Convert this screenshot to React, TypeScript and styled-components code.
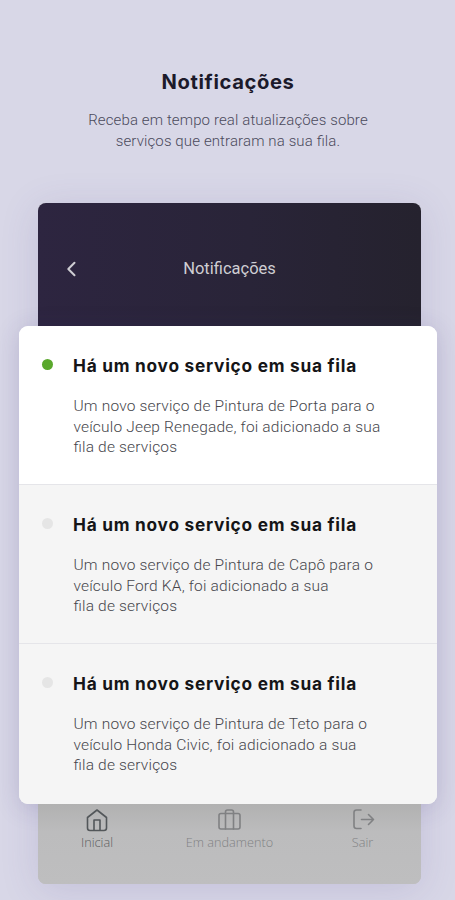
import React from "react";
import styled, { createGlobalStyle } from "styled-components";

const GlobalStyle = createGlobalStyle`
  * { box-sizing: border-box; }
  body { margin: 0; background: #d8d7e7; }
`;

const Page = styled.main`
  height: 900px;
  overflow: hidden;
  padding-top: 66px;
  background: #d8d7e7;
  font-family: Roboto, sans-serif;
`;

const Intro = styled.header`
  height: 137px;
  text-align: center;
`;

const Title = styled.h1`
  margin: 0;
  padding-left: 1px;
  font: 700 20.2px/31px Inter, sans-serif;
  letter-spacing: 0.6px;
  color: #1c1a2b;
`;

const Lead = styled.p`
  margin: 13px 0 0;
  padding-left: 1px;
  font-size: 15px;
  font-weight: 300;
  letter-spacing: 0.12px;
  font-feature-settings: "liga" 1;
  line-height: 21px;
  color: #4b4a5c;
`;

const Phone = styled.section`
  width: 383px;
  height: 681px;
  margin-left: 38px;
  border-radius: 8px;
  background: #bebebf;
  box-shadow: 0 6px 38px rgba(80, 70, 140, 0.15);
`;

const TopBar = styled.div`
  display: grid;
  grid-template-columns: 1fr auto 1fr;
  align-items: center;
  height: 123px;
  padding: 8px 26px 0;
  border-radius: 8px 8px 0 0;
  background: linear-gradient(90deg, #2d2540, #292438 55%, #25222e);
  color: #cfced3;
`;

const BackIcon = styled.svg`
  width: 14px;
  height: 16px;
`;

const BarTitle = styled.h2`
  margin: 0;
  font-size: 16.5px;
  font-weight: 400;
  line-height: 22px;
`;

const Cards = styled.ul`
  width: 418px;
  height: 478px;
  margin: 0 0 0 -19px;
  padding: 0;
  list-style: none;
  overflow: hidden;
  border-radius: 9px;
  background: #f5f5f5;
  box-shadow: 0 4px 24px rgba(60, 50, 110, 0.17);
`;

const Card = styled.li<{ $unread?: boolean }>`
  display: grid;
  grid-template-columns: 12px 1fr;
  column-gap: 20px;
  height: 159px;
  padding: 27px 20px 0 22px;
  background: ${(p) => (p.$unread ? "#fff" : "#f5f5f5")};
  border-bottom: 1px solid #e5e5e9;
  &:last-child { height: 160px; border-bottom: 0; }
`;

const Dot = styled.span<{ $unread?: boolean }>`
  width: 11px;
  height: 11px;
  margin: 6px 0 0 0.5px;
  border-radius: 50%;
  background: ${(p) => (p.$unread ? "#5aa82c" : "#e5e5e5")};
`;

const CardTitle = styled.h3`
  margin: 0;
  font: 700 17.3px/26px Inter, sans-serif;
  letter-spacing: 0.74px;
  color: #151517;
  white-space: nowrap;
`;

const CardText = styled.p`
  margin: 17px 0 0;
  padding-left: 0.5px;
  font-size: 15.5px;
  font-weight: 300;
  letter-spacing: 0.18px;
  font-feature-settings: "liga" 1;
  line-height: 20.7px;
  color: #46464c;
  white-space: pre-line;
`;

const TabBar = styled.nav`
  display: grid;
  grid-template-columns: 118px 147px 119px;
  height: 80px;
  border-radius: 0 0 8px 8px;
  background: linear-gradient(#b1b1b1, #bcbcbd 35%, #bebebf);
`;

const Tab = styled.a<{ $active?: boolean }>`
  display: flex;
  flex-direction: column;
  align-items: center;
  padding-top: 4px;
  color: ${(p) => (p.$active ? "#53575a" : "#808183")};
`;

const TabIcon = styled.svg`
  width: 26px;
  height: 24px;
`;

const TabLabel = styled.span<{ $active?: boolean }>`
  font: 300 12.7px/18px "Open Sans", sans-serif;
  margin-top: 1px;
  white-space: nowrap;
  color: ${(p) => (p.$active ? "#5c5e60" : "#818284")};
`;

const notices = [
  { id: 1, unread: true, text: "Um novo serviço de Pintura de Porta para o\nveículo Jeep Renegade, foi adicionado a sua\nfila de serviços" },
  { id: 2, unread: false, text: "Um novo serviço de Pintura de Capô para o\nveículo Ford KA, foi adicionado a sua\nfila de serviços" },
  { id: 3, unread: false, text: "Um novo serviço de Pintura de Teto para o\nveículo Honda Civic, foi adicionado a sua\nfila de serviços" },
];

const stroke = {
  fill: "none",
  stroke: "currentColor",
  strokeWidth: 1.6,
  strokeLinecap: "round" as const,
  strokeLinejoin: "round" as const,
};

export default function App() {
  return (
    <Page>
      <GlobalStyle />
      <Intro>
        <Title>Notificações</Title>
        <Lead>
          Receba em tempo real atualizações sobre
          <br />
          serviços que entraram na sua fila.
        </Lead>
      </Intro>
      <Phone>
        <TopBar>
          <BackIcon viewBox="0 0 14 16" {...stroke} strokeWidth={2}>
            <path d="M10.500 1.800 4.300 8l6.200 6.200" />
          </BackIcon>
          <BarTitle>Notificações</BarTitle>
        </TopBar>
        <Cards>
          {notices.map((n) => (
            <Card key={n.id} $unread={n.unread}>
              <Dot $unread={n.unread} />
              <div>
                <CardTitle>Há um novo serviço em sua fila</CardTitle>
                <CardText>{n.text}</CardText>
              </div>
            </Card>
          ))}
        </Cards>
        <TabBar>
          <Tab $active>
            <TabIcon viewBox="0 0 26 24" {...stroke}>
              <path d="M3.500 9.500 13 2l9.500 7.500V20q0 2.500-2.500 2.500H6Q3.500 22.500 3.500 20Z" />
              <path d="M10 22V12h6v10" />
            </TabIcon>
            <TabLabel $active>Inicial</TabLabel>
          </Tab>
          <Tab>
            <TabIcon viewBox="0 0 26 24" {...stroke}>
              <rect x="2" y="5.500" width="21" height="15.500" rx="2" />
              <path d="M8.500 21V4q0-2 2-2h4q2 0 2 2v17" />
            </TabIcon>
            <TabLabel>Em andamento</TabLabel>
          </Tab>
          <Tab>
            <TabIcon viewBox="0 0 26 24" {...stroke}>
              <path d="M11 2H6.500Q4 2 4 4.500v13.500q0 2.500 2.500 2.500H11M11.500 11.500h12M18.500 6.500l5 5-5 5" />
            </TabIcon>
            <TabLabel>Sair</TabLabel>
          </Tab>
        </TabBar>
      </Phone>
    </Page>
  );
}
